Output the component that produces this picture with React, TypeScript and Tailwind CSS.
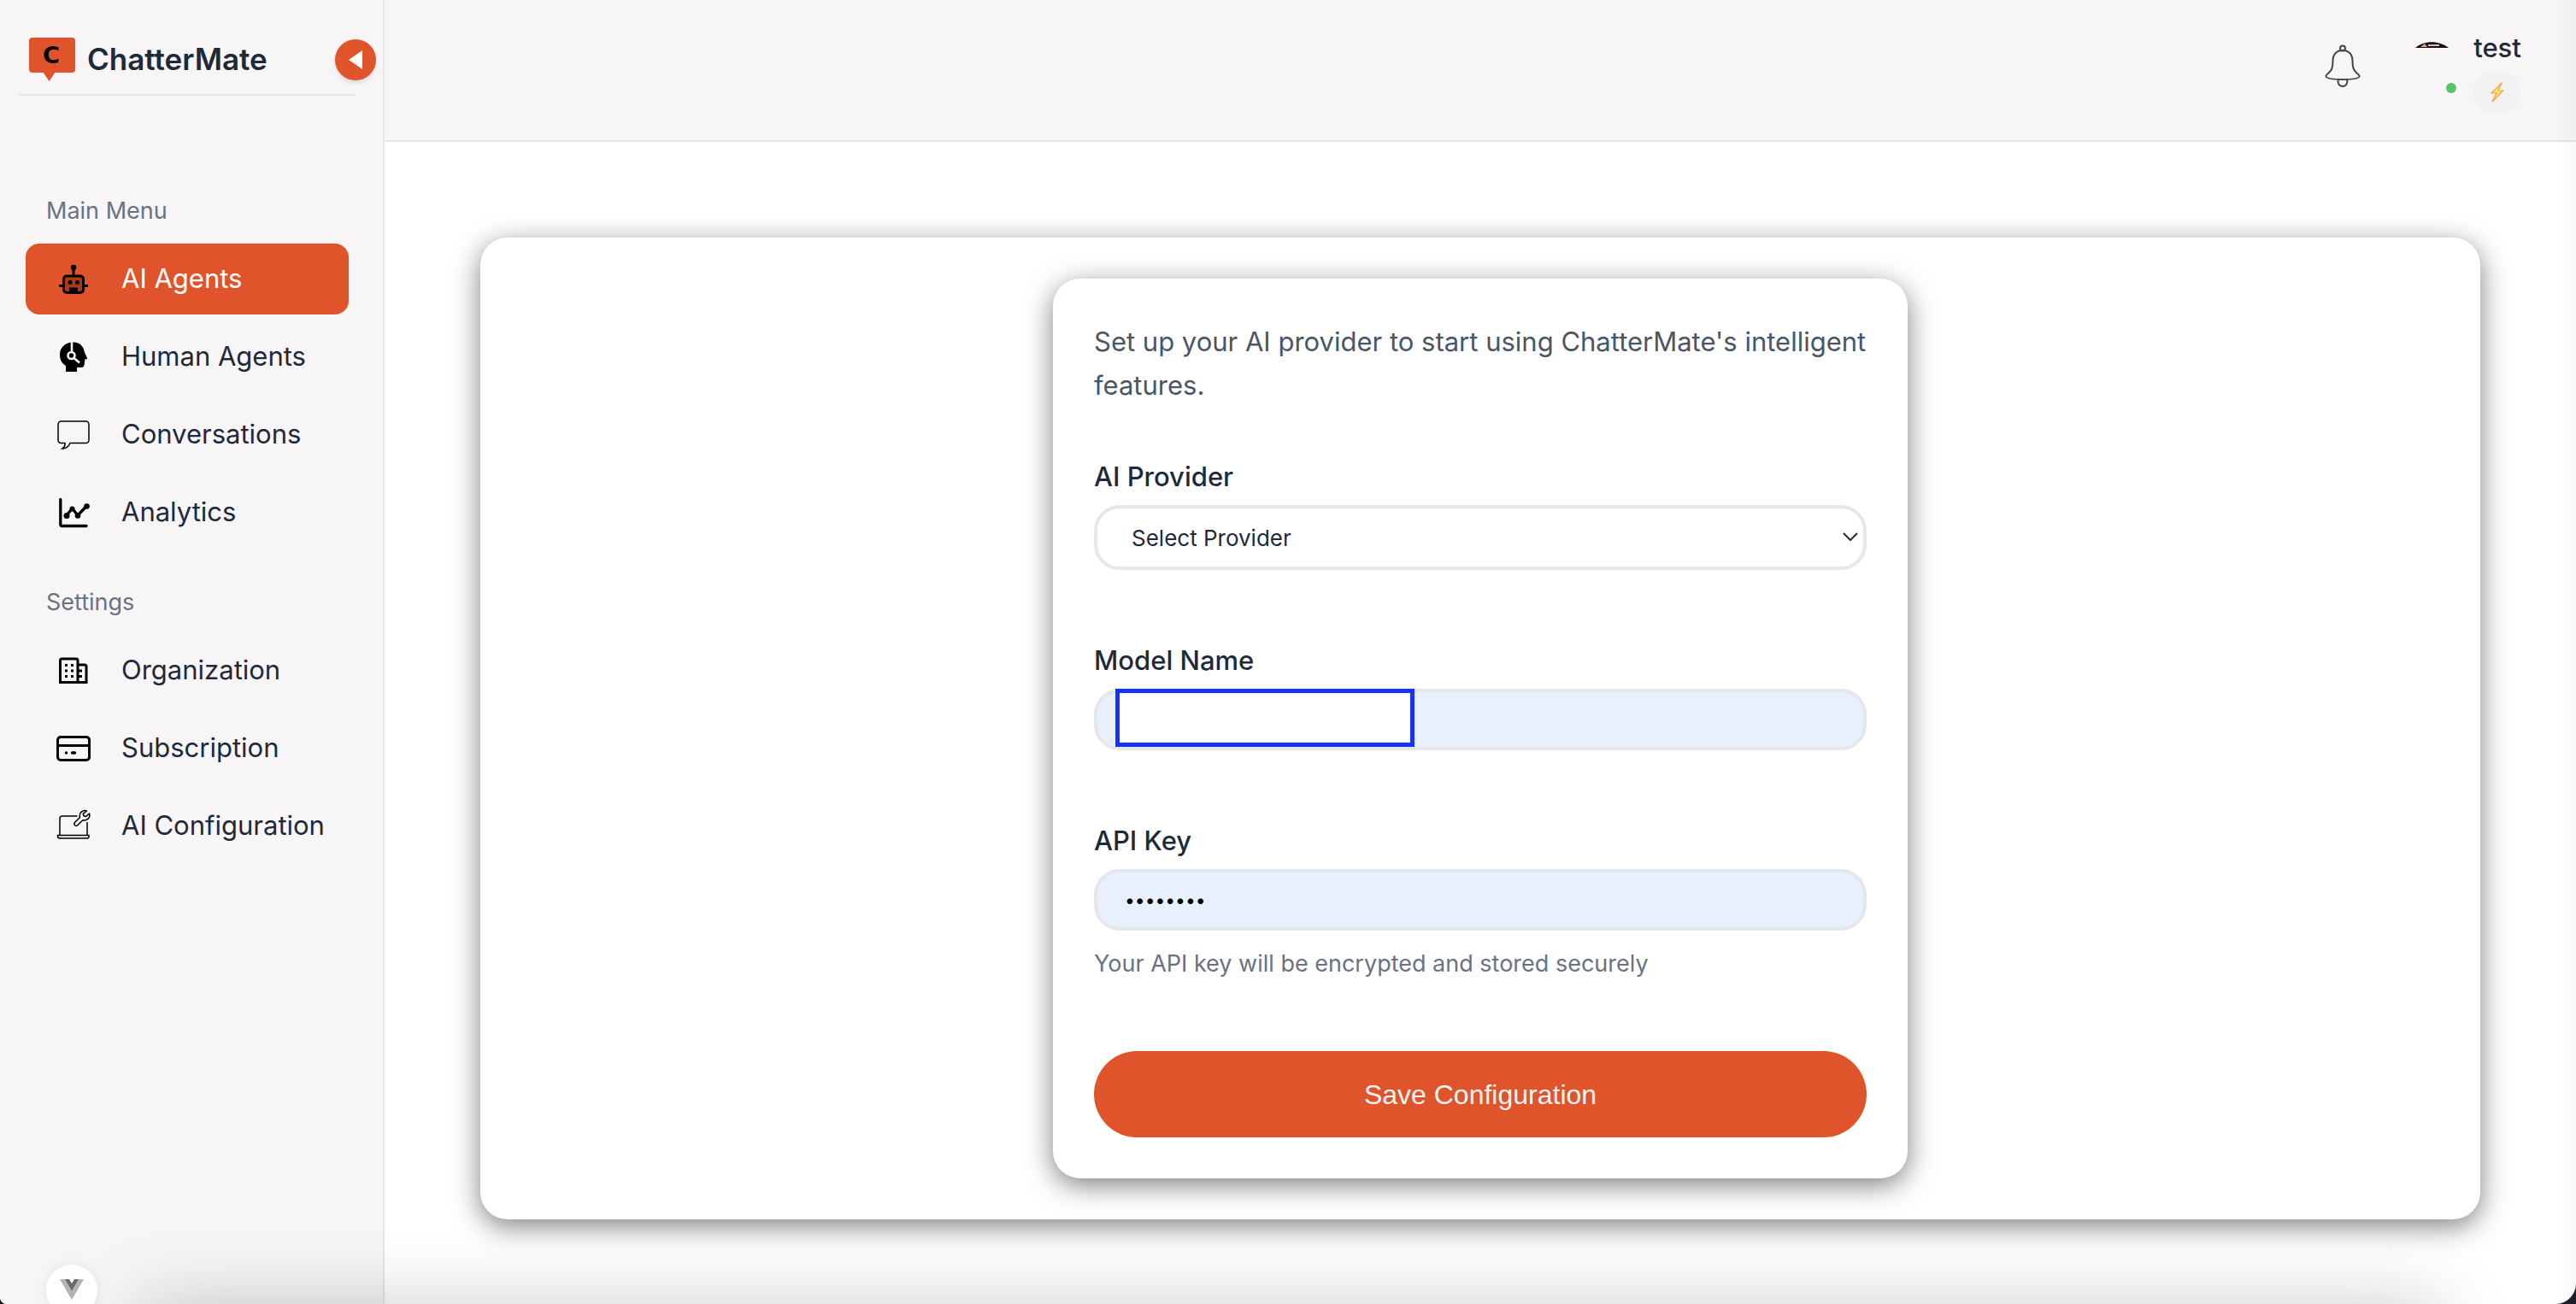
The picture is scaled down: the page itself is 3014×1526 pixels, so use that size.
import type { ReactNode } from "react";

function Svg({ children }: { children: ReactNode }) {
  return (
    <svg viewBox="0 0 40 40" className="size-10 shrink-0" fill="none" stroke="#000" aria-hidden="true">
      {children}
    </svg>
  );
}

const RobotIcon = () => (
  <Svg>
    <rect x="8.5" y="16" width="23" height="19.5" rx="3.5" fill="#a93a18" strokeWidth="3" />
    <path d="M20 7v9M3 27.500h5M32 27.500h5" strokeWidth="3" />
    <circle cx="20" cy="6" r="3.2" fill="#000" stroke="none" />
    <circle cx="16" cy="23.500" r="2.500" fill="#000" stroke="none" />
    <circle cx="24.500" cy="23.500" r="2.500" fill="#000" stroke="none" />
    <path d="M15 29.500h10v6H15z" fill="#000" stroke="none" />
  </Svg>
);

const HeadIcon = () => (
  <Svg>
    <path
      d="M18 2.600C27 1.600 32 7.500 32.800 14l3.200 7c.3.800-.2 1.300-1 1.300h-1.500l-1 7c-.3 1.800-1.500 2.700-3.300 2.700H24v5H11v-7C6 27 4 22.500 4 17 4 9 10 3.200 18 2.600z"
      fill="#000"
      stroke="none"
    />
    <path d="M18 2v12M20.500 21l6.500 5.500" stroke="#f7f5f6" strokeWidth="2.600" />
    <circle cx="17.500" cy="18" r="4" stroke="#f7f5f6" strokeWidth="2.600" />
  </Svg>
);

const ChatIcon = () => (
  <Svg>
    <path
      d="M5.500 4h29a3.500 3.500 0 0 1 3.500 3.500v18.500a3.500 3.500 0 0 1-3.500 3.500H16c-1.500 3.500-4.500 6.500-9 6.500 2.500-1.500 3.300-3.500 3-6.500H5.500A3.500 3.500 0 0 1 2 26V7.500A3.500 3.500 0 0 1 5.500 4z"
      strokeWidth="1.500"
    />
  </Svg>
);

const ChartIcon = () => (
  <Svg>
    <path d="M4.800 4.500v29a2 2 0 0 0 2 2H35M12 23l6.500-8 6.500 8 10-10.500" strokeWidth="3.300" strokeLinecap="round" strokeLinejoin="round" />
    <g fill="#000" stroke="none">
      <circle cx="12" cy="23.500" r="3.500" />
      <circle cx="18.500" cy="15.500" r="3" />
      <circle cx="25" cy="23.500" r="3.300" />
      <circle cx="35.500" cy="12.500" r="3.300" />
    </g>
  </Svg>
);

const BuildingIcon = () => (
  <Svg>
    <path d="M4.500 33.500V8a2 2 0 0 1 2-2H23a2 2 0 0 1 2 2v25.500zM25 13h8a2 2 0 0 1 2 2v18.500H25" strokeWidth="3" />
    <path
      d="M10 12h3v3h-3zM17 12h3v3h-3zM10 18.500h3v3h-3zM17 18.500h3v3h-3zM10 25h3v3h-3zM17 25h3v3h-3zM26 18.500h4v3h-4zM26 25h4v3h-4z"
      fill="#000"
      stroke="none"
    />
  </Svg>
);

const CardIcon = () => (
  <Svg>
    <rect x="1.500" y="6.500" width="37" height="27" rx="3.500" strokeWidth="3" />
    <path d="M2 16.500h36" strokeWidth="3" />
    <path d="M11.500 25h.1M18.500 25h3" strokeWidth="3.400" strokeLinecap="round" />
  </Svg>
);

const LaptopIcon = () => (
  <Svg>
    <path d="M24.500 8H7a3 3 0 0 0-3 3v19M36 15v15M1.500 30.500h36.500v1.500a2 2 0 0 1-2 2h-32a2.500 2.500 0 0 1-2.500-2.500z" strokeWidth="1.500" />
    <path
      d="M35.500 2c-4-1.500-9.500 1.500-8 7.500l-6 6c-2 2.200 1 5.200 3.200 3.200l6.300-6C37 14 40 9 38.500 5l-3.800 3.500-2.700-.7-.7-2.600z"
      strokeWidth="1.500"
      strokeLinejoin="round"
    />
  </Svg>
);

const mainMenu = [
  { label: "AI Agents", icon: <RobotIcon />, active: true },
  { label: "Human Agents", icon: <HeadIcon /> },
  { label: "Conversations", icon: <ChatIcon /> },
  { label: "Analytics", icon: <ChartIcon /> },
];

const settings = [
  { label: "Organization", icon: <BuildingIcon /> },
  { label: "Subscription", icon: <CardIcon /> },
  { label: "AI Configuration", icon: <LaptopIcon /> },
];

function NavGroup({ title, items }: { title: string; items: { label: string; icon: ReactNode; active?: boolean }[] }) {
  return (
    <section>
      <h2 className="px-6 text-[27px] leading-[44px] text-gray-500">{title}</h2>
      <ul className="mt-4 flex flex-col gap-2">
        {items.map((item) => (
          <li key={item.label}>
            <a
              href="#"
              className={
                item.active
                  ? "flex h-[83px] items-center gap-9 rounded-2xl bg-[#e0542b] px-9 text-[31px] text-white"
                  : "flex h-[83px] items-center gap-9 rounded-2xl px-9 text-[31px] text-gray-800"
              }
            >
              {item.icon}
              <span className="whitespace-nowrap">{item.label}</span>
            </a>
          </li>
        ))}
      </ul>
    </section>
  );
}

function Sidebar() {
  return (
    <aside className="relative flex w-[450px] shrink-0 flex-col border-r-2 border-gray-200 bg-[#f7f5f6]">
      <div className="mr-8 ml-[22px] flex h-28 items-center border-b-2 border-gray-200 pt-7">
        <svg viewBox="0 0 54 51" className="ml-3 h-[51px] w-[54px] shrink-0" aria-hidden="true">
          <rect width="54" height="41" rx="4" fill="#e0542b" />
          <path d="M16 40h15l-7.500 11z" fill="#e0542b" />
          <text x="26" y="30" textAnchor="middle" className="font-['DejaVu_Sans'] text-[27px] font-bold" fill="#000">
            C
          </text>
        </svg>
        <span className="ml-3.5 text-[35px] font-semibold text-gray-800">ChatterMate</span>
      </div>
      <button
        type="button"
        aria-label="Collapse sidebar"
        className="absolute top-[46px] right-2 flex size-12 items-center justify-center rounded-full bg-[#e0542b] shadow-md"
      >
        <svg viewBox="0 0 16 22" className="h-[22px] w-4" aria-hidden="true">
          <path d="M16 0v22L0 11z" fill="#fff" />
        </svg>
      </button>
      <nav className="flex flex-col gap-[42px] pt-[113px] pr-10 pl-[30px]">
        <NavGroup title="Main Menu" items={mainMenu} />
        <NavGroup title="Settings" items={settings} />
      </nav>
    </aside>
  );
}

function Header() {
  return (
    <header className="flex h-[166px] items-start justify-end border-b-2 border-gray-200 bg-[#f7f5f6] pr-16">
      <button type="button" aria-label="Notifications" className="mt-[52px]">
        <svg viewBox="0 0 42 50" className="h-[50px] w-[42px]" fill="none" stroke="#444" strokeWidth="2" aria-hidden="true">
          <circle cx="21" cy="4.500" r="3" />
          <path d="M21 7c-7 0-11.500 4.500-11.500 12 0 8-1 11-5 14.500C2 35.500 1 36 1.500 37.500 2.500 40 10 41 21 41s18.500-1 19.500-3.500c.5-1.500-.5-2-3-4-4-3.500-5-6.500-5-14.500C32.500 11.500 28 7 21 7z" />
          <path d="M16 41c-1.500 4 1 8 5 8s6.500-4 5-8" />
        </svg>
      </button>
      <div className="ml-15 flex items-start gap-6">
        <div className="mt-12 flex w-12 flex-col">
          <svg viewBox="0 0 48 8" className="h-2" aria-hidden="true">
            <path d="M4 8C14-1 32-1 43 8z" fill="#1c1018" />
            <path d="M10 7l5-4 3 4z" fill="#d9a66c" />
            <path d="M19 5h13" stroke="#fff" strokeWidth="1.500" />
          </svg>
          <span className="mt-[41px] -mr-1 size-3 self-end rounded-full bg-[#5ec26a]" />
        </div>
        <div className="flex flex-col items-center">
          <span className="mt-9 text-[31px] leading-10 font-medium text-gray-800">test</span>
          <span className="mt-2 flex h-12 w-14 items-center justify-center rounded-3xl bg-[#f2f2f2]">
            <svg viewBox="0 0 16 24" className="h-6 w-4" aria-hidden="true">
              <path d="M13 1L1 13h6L2 23l13-13H9z" fill="#fde36b" stroke="#f2a444" strokeWidth="1.200" strokeLinejoin="round" />
            </svg>
          </span>
        </div>
      </div>
    </header>
  );
}

function ProviderForm() {
  return (
    <form className="w-[1000px] rounded-[32px] bg-white p-12 shadow-[0_8px_32px_rgba(0,0,0,0.5)]">
      <p className="text-[31px] leading-[51px] text-gray-600">
        Set up your AI provider to start using ChatterMate's intelligent features.
      </p>

      <div className="mt-14 flex flex-col gap-2">
        <label htmlFor="provider" className="text-[31px] leading-[51px] font-medium text-gray-800">
          AI Provider
        </label>
        <div className="relative">
          <select
            id="provider"
            className="h-[76px] w-full appearance-none rounded-[30px] border-4 border-gray-200 bg-white px-10 text-[26px] text-gray-800"
          >
            <option>Select Provider</option>
          </select>
          <svg viewBox="0 0 18 10" className="pointer-events-none absolute top-8 right-2.5 h-2.5 w-[18px]" fill="none" stroke="#1f2937" strokeWidth="2" aria-hidden="true">
            <path d="M1 1l8 8 8-8" />
          </svg>
        </div>
      </div>

      <div className="mt-20 flex flex-col gap-2">
        <label htmlFor="model" className="text-[31px] leading-[51px] font-medium text-gray-800">
          Model Name
        </label>
        <div className="relative">
          <input id="model" type="text" className="block h-[72px] w-full rounded-[30px] border-4 border-gray-200 bg-[#e8effd] px-8" />
          <div className="pointer-events-none absolute top-0 left-[25px] h-[68px] w-[350px] border-[5px] border-[#1433f5] bg-white" />
        </div>
      </div>

      <div className="mt-20 flex flex-col gap-2">
        <label htmlFor="key" className="text-[31px] leading-[51px] font-medium text-gray-800">
          API Key
        </label>
        <input
          id="key"
          type="password"
          defaultValue="password"
          className="h-[72px] w-full rounded-[30px] border-4 border-gray-200 bg-[#e8effd] px-8 text-[21px] text-black"
        />
        <p className="mt-2 text-[27px] leading-[45px] text-gray-500">Your API key will be encrypted and stored securely</p>
      </div>

      <button type="submit" className="mt-20 h-[101px] w-full rounded-full bg-[#e0542b] font-['Liberation_Sans',sans-serif] text-[32px] text-gray-100">
        Save Configuration
      </button>
    </form>
  );
}

export default function App() {
  return (
    <div className="bg-[#1c1e28]">
      <div className="relative flex min-h-screen overflow-hidden rounded-br-3xl rounded-bl-lg bg-white font-[Inter,'Liberation_Sans',sans-serif]">
        <Sidebar />
        <div className="flex min-w-0 grow flex-col">
          <Header />
          <main className="p-28 pb-24">
            <div className="flex justify-center rounded-[32px] bg-white p-12 shadow-[0_8px_32px_rgba(0,0,0,0.5)]">
              <ProviderForm />
            </div>
          </main>
        </div>
        <div className="pointer-events-none absolute inset-x-40 -bottom-40 h-40 shadow-[0_0_90px_rgba(0,0,0,0.2)]" />
        <div className="pointer-events-none absolute inset-y-0 right-0 w-6 bg-linear-to-l from-black/3 to-transparent" />
        <button
          type="button"
          aria-label="Open devtools"
          className="absolute -bottom-3.5 left-[54px] flex size-[60px] justify-center rounded-full bg-white pt-[17px] shadow-[0_0_16px_rgba(0,0,0,0.08)]"
        >
          <svg viewBox="0 0 28 24" className="h-6 w-7" aria-hidden="true">
            <path d="M0 0h6l8 14 8-14h6L14 24z" fill="#b3b3b3" />
            <path d="M6 0h5l3 5 3-5h5l-8 14z" fill="#6b6b6b" />
          </svg>
        </button>
      </div>
    </div>
  );
}
